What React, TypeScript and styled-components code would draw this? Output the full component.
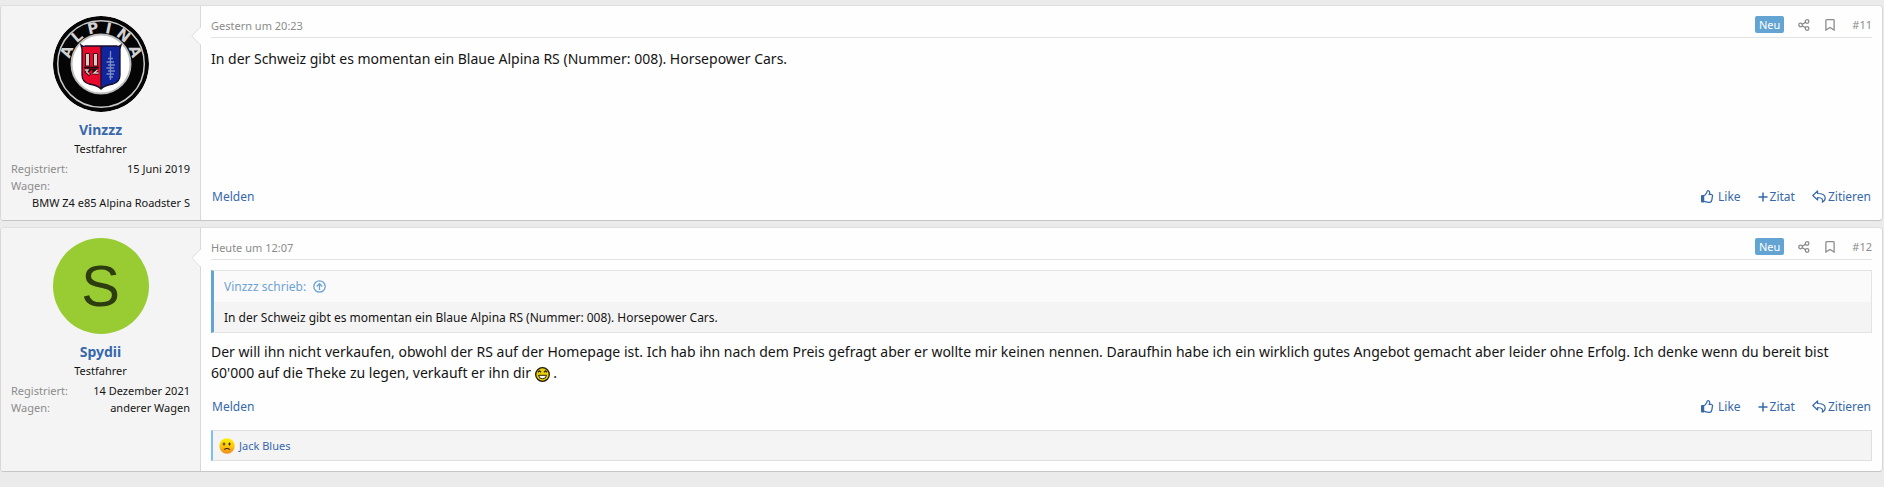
import React from 'react';
import styled, { createGlobalStyle } from 'styled-components';

const GlobalStyle = createGlobalStyle`
  *, *::before, *::after { box-sizing: border-box; }
  body {
    margin: 0;
    background: #ebebeb;
    color: #141414;
    font-family: "Noto Sans", "Open Sans", sans-serif;
    font-size: 14px;
    line-height: 21px;
  }
  a { color: #3768ab; text-decoration: none; }
`;

const Thread = styled.main`
  display: flex;
  flex-direction: column;
  gap: 6px;
  padding: 5px 1px 10px 0;
`;

const Post = styled.article`
  display: flex;
  background: #fefefe;
  border: 1px solid #d8d8d8;
  border-top-color: #dfdfdf;
  border-bottom-color: #c6c6c6;
  border-radius: 4px;
`;

const UserCell = styled.aside`
  position: relative;
  flex: 0 0 200px;
  display: flex;
  flex-direction: column;
  padding: 10px 10px 9px;
  background: #f4f4f4;
  border-right: 1px solid #d8d8d8;
  border-radius: 3px 0 0 3px;
`;

const Arrow = styled.svg`
  position: absolute;
  top: 20px;
  right: -1px;
`;

const Avatar = styled.a`
  display: block;
  align-self: center;
  width: 96px;
  height: 96px;
  border-radius: 50%;
  overflow: hidden;
`;

const LetterAvatar = styled(Avatar)`
  display: flex;
  align-items: center;
  justify-content: center;
  background: #99cc33;
  color: #2e3d0f;
  font-family: "Liberation Sans", Arial, sans-serif;
  font-size: 58px;
  line-height: 96px;
`;

const UserName = styled.h4`
  margin: 7px 0 0;
  font-size: 14px;
  font-weight: 700;
  line-height: 22px;
  text-align: center;
`;

const UserTitle = styled.h5`
  margin: 0 0 4px;
  font-size: 11px;
  font-weight: 400;
  line-height: 15px;
  text-align: center;
`;

const Facts = styled.dl`
  margin: 0;
  font-size: 11px;
  line-height: 17px;
`;

const Fact = styled.div`
  display: flex;
  flex-wrap: wrap;
  justify-content: space-between;
`;

const FactLabel = styled.dt`
  color: #8c8c8c;
`;

const FactValue = styled.dd`
  flex-grow: 1;
  margin: 0;
  text-align: right;
`;

const MainCell = styled.div`
  flex: 1;
  min-width: 0;
  display: flex;
  flex-direction: column;
  padding: 10px;
`;

const PostHeader = styled.header`
  display: flex;
  justify-content: space-between;
  height: 22px;
  border-bottom: 1px solid #e3e3e3;
  color: #8c8c8c;
  font-size: 11px;
  line-height: 19px;
  a { color: inherit; }
`;

const HeaderTools = styled.ul`
  display: flex;
  margin: 0;
  padding: 0;
  list-style: none;
`;

const Tool = styled.li<{ $gap: number }>`
  display: flex;
  align-items: center;
  height: 17px;
  margin-left: ${({ $gap }) => $gap}px;
  a { display: flex; }
`;

const NewBadge = styled.span`
  padding: 0 4px;
  border-radius: 2px;
  background: #63a4d2;
  color: #fefefe;
  line-height: 17px;
`;

const Message = styled.div`
  margin: 10px 0;
`;

const Quote = styled.blockquote`
  margin: 0 0 8px;
  border: 1px solid #e3e3e3;
  border-left: 3px solid #63a4d2;
  background: #f4f4f4;
  font-size: 12px;
`;

const QuoteTitle = styled.a`
  display: flex;
  align-items: center;
  gap: 7px;
  height: 31px;
  padding: 0 10px;
  background: #fafafa;
  && { color: #6ea3d4; }
`;

const QuoteText = styled.div`
  padding: 6px 10px 4px;
  line-height: 20px;
`;

const Smiley = styled.svg`
  vertical-align: -4px;
`;

const PostFooter = styled.footer`
  display: flex;
  align-items: center;
  justify-content: space-between;
  height: 27px;
  margin-top: auto;
  padding: 0 1px;
  font-size: 12px;
`;

const Actions = styled.div`
  display: flex;
  gap: 17px;
`;

const Action = styled.a<{ $gap?: number }>`
  display: flex;
  align-items: center;
  gap: ${({ $gap = 2 }) => $gap}px;
`;

const Reactions = styled.div`
  display: flex;
  align-items: center;
  gap: 4px;
  height: 31px;
  margin-top: 10px;
  padding: 0 6px;
  border: 1px solid #dfdfdf;
  border-left: 2px solid #7ebeec;
  background: #f4f4f4;
  font-size: 11px;
`;

const AlpinaLogo = () => (
  <svg width="96" height="96" viewBox="0 0 96 96" role="img" aria-label="Alpina">
    <defs>
      <path id="ring" d="M17.500 56 A31.500 31.500 0 1 1 78.500 56" />
    </defs>
    <circle cx="48" cy="48" r="48" fill="#050505" />
    <circle cx="48" cy="48" r="43.300" fill="none" stroke="#c9c9c9" strokeWidth="1.500" />
    <circle cx="48" cy="48" r="29.500" fill="#fff" stroke="#bdbdbd" strokeWidth="2" />
    <text
      fill="#d2d2d2"
      fontFamily="DejaVu Sans, sans-serif"
      fontWeight="700"
      fontSize="15"
      textAnchor="middle"
    >
      <textPath href="#ring" startOffset="50%">A L P I N A</textPath>
    </text>
    <path d="M28 29 Q30 31 32 30 H48 V73 Q44 69 36 68 Q29 66 29 59 V33 Z" fill="#e6092c" />
    <path d="M68 29 Q66 31 64 30 H48 V73 Q52 69 60 68 Q67 66 67 59 V33 Z" fill="#10259b" />
    <path
      d="M28 29 Q30 31 32 30 H64 Q66 31 68 29 L67 33 V59 Q67 66 60 68 Q52 69 48 73 Q44 69 36 68 Q29 66 29 59 V33 Z M48 30 V72"
      fill="none"
      stroke="#180e28"
      strokeWidth="1.300"
    />
    <path d="M32.500 37.500 H36.500 V50 H32.500 Z M40.500 37.500 H44.500 V50 H40.500 Z" fill="#d8cfc8" stroke="#3a1014" strokeWidth="1" />
    <path d="M31 51.500 H46" stroke="#1e090c" strokeWidth="1.600" />
    <path d="M32 54 H36 L33.500 56 L37 59 M44.500 54 H41 V58 M39.500 57 H45.500" fill="none" stroke="#1e090c" strokeWidth="3" />
    <path d="M32 54 H35 L33.500 56 L36.500 58.500 M44.500 54 L41 57 H45.500" fill="none" stroke="#d8cfc8" strokeWidth="1.300" />
    <path
      d="M57.500 35 V64 M55 42.500 H60 M53.500 46 H61 M55 49 H62 M53.500 52 H61 M55 55 H62 M53.500 58 H61 M56 61 H60"
      fill="none"
      stroke="#7c8bc0"
      strokeWidth="1.300"
    />
  </svg>
);

const ShareIcon = () => (
  <svg width="12" height="12" viewBox="0 0 12 12" fill="none" stroke="#8c8c8c" strokeWidth="1.300" aria-hidden="true">
    <circle cx="2.600" cy="6" r="1.800" />
    <circle cx="9.100" cy="2.500" r="1.800" />
    <circle cx="9.100" cy="9.500" r="1.800" />
    <path d="M4.200 5.200 L7.500 3.400 M4.200 6.800 L7.500 8.600" />
  </svg>
);

const BookmarkIcon = () => (
  <svg width="10" height="12" viewBox="0 0 10 12" fill="none" stroke="#8c8c8c" strokeWidth="1.300" aria-hidden="true">
    <path d="M0.900 11 V1.500 Q0.900 0.700 1.700 0.700 H8.300 Q9.100 0.700 9.100 1.500 V11 L5 8.500 Z" />
  </svg>
);

const LikeIcon = () => (
  <svg width="13" height="13" viewBox="0 0 512 512" fill="#3768ab" aria-hidden="true">
    <path d="M466.270 286.690C475.040 271.840 480 256 480 236.850c0-44.015-37.218-85.580-85.820-85.580H357.700c4.920-12.810 8.850-28.130 8.850-46.540C366.550 31.936 328.860 0 271.280 0c-61.607 0-58.093 94.933-71.760 108.600-22.747 22.747-49.615 66.447-68.760 83.400H32c-17.673 0-32 14.327-32 32v240c0 17.673 14.327 32 32 32h64c14.893 0 27.408-10.174 30.978-23.950 44.509 1.001 75.060 39.940 177.802 39.940 7.220 0 15.220.010 22.220.010 77.117 0 111.986-39.423 112.940-95.330 13.319-18.425 20.299-43.122 17.340-66.990 9.854-18.452 13.664-40.343 8.990-62.990zm-61.750 53.830c12.560 21.130 1.260 49.410-13.940 57.570 7.700 48.780-17.608 65.900-53.120 65.900h-37.820c-71.639 0-118.029-37.820-171.640-37.820V240h10.920c28.360 0 67.980-70.890 94.540-97.460 28.360-28.360 18.910-75.630 37.820-94.540 47.270 0 47.270 32.980 47.270 56.730 0 39.170-28.360 56.720-28.360 94.540h103.990c21.110 0 37.730 18.910 37.820 37.820.090 18.900-12.820 37.810-22.270 37.810 13.489 14.555 16.371 45.236-5.210 65.620z" />
  </svg>
);

const PlusIcon = () => (
  <svg width="10" height="10" viewBox="0 0 10 10" stroke="#3768ab" strokeWidth="1.500" aria-hidden="true">
    <path d="M5 0.500 V9.500 M0.500 5 H9.500" />
  </svg>
);

const ReplyIcon = () => (
  <svg width="14" height="13" viewBox="0 0 14 13" fill="none" stroke="#3768ab" strokeWidth="1.200" strokeLinejoin="round" aria-hidden="true">
    <path d="M0.800 5.500 L5.600 1 V3.500 C10.500 3.500 13.200 4.800 13.200 8 C13.200 9.900 12.200 11.300 10.300 12.200 C11.200 9.400 10.300 7.500 5.600 7.500 V10 Z" />
  </svg>
);

const JumpIcon = () => (
  <svg width="13" height="13" viewBox="0 0 13 13" fill="none" stroke="#6ea3d4" strokeWidth="1.300" aria-hidden="true">
    <circle cx="6.500" cy="6.500" r="5.700" />
    <path d="M6.500 10 V3.800 M3.700 6.500 L6.500 3.700 L9.300 6.500" />
  </svg>
);

const GrinSmiley = () => (
  <Smiley width="15" height="15" viewBox="0 0 15 15" role="img" aria-label="Großes Grinsen">
    <circle cx="7.500" cy="7.500" r="6.800" fill="#e9cf0c" stroke="#1c1800" strokeWidth="1.300" />
    <path d="M3 5.200 L4.500 3.800 L6 5.200 M9 5.200 L10.500 3.800 L12 5.200" fill="none" stroke="#2a2300" strokeWidth="1.200" />
    <path d="M3.500 8.300 H11.500 Q11 11.800 7.500 11.800 Q4 11.800 3.500 8.300 Z" fill="#fff" stroke="#2a2300" strokeWidth="1" />
  </Smiley>
);

const SadFace = () => (
  <svg width="16" height="16" viewBox="0 0 16 16" role="img" aria-label="Traurig">
    <defs>
      <linearGradient id="face" x1="0" y1="0" x2="0" y2="1">
        <stop offset="0" stopColor="#fff200" />
        <stop offset="0.500" stopColor="#fdc70c" />
        <stop offset="1" stopColor="#f08a1c" />
      </linearGradient>
    </defs>
    <circle cx="8" cy="8" r="7.700" fill="url(#face)" />
    <path d="M5 4.500 V7.500 M10.500 4.500 V7.500 M3.700 6 H6.300 M9.200 6 H11.800" stroke="#3b2500" strokeWidth="1" />
    <path d="M5 11.600 Q8 9.300 11 11.600" fill="none" stroke="#3b2500" strokeWidth="1.100" />
  </svg>
);

interface PostProps {
  avatar: React.ReactNode;
  user: string;
  facts: [string, string][];
  time: string;
  number: string;
  reactions?: React.ReactNode;
  children: React.ReactNode;
}

const ForumPost = ({ avatar, user, facts, time, number, reactions, children }: PostProps) => (
  <Post>
    <UserCell>
      <Arrow width="10" height="20" viewBox="0 0 10 20" aria-hidden="true">
        <path d="M10 1 L1 10 L10 19 Z" fill="#fefefe" />
        <path d="M9.500 1 L0.800 10 L9.500 19" fill="none" stroke="#dfdfdf" />
      </Arrow>
      {avatar}
      <UserName><a href="#user">{user}</a></UserName>
      <UserTitle>Testfahrer</UserTitle>
      <Facts>
        {facts.map(([label, value]) => (
          <Fact key={label}>
            <FactLabel>{label}:</FactLabel>
            <FactValue>{value}</FactValue>
          </Fact>
        ))}
      </Facts>
    </UserCell>
    <MainCell>
      <PostHeader>
        <a href="#post"><time>{time}</time></a>
        <HeaderTools>
          <Tool $gap={0}><NewBadge>Neu</NewBadge></Tool>
          <Tool $gap={14}><a href="#share" aria-label="Teilen"><ShareIcon /></a></Tool>
          <Tool $gap={15}><a href="#bookmark" aria-label="Lesezeichen"><BookmarkIcon /></a></Tool>
          <Tool $gap={17}><a href="#post">{number}</a></Tool>
        </HeaderTools>
      </PostHeader>
      <Message>{children}</Message>
      <PostFooter>
        <a href="#report">Melden</a>
        <Actions>
          <Action href="#like" $gap={4}><LikeIcon />Like</Action>
          <Action href="#multiquote"><PlusIcon />Zitat</Action>
          <Action href="#reply"><ReplyIcon />Zitieren</Action>
        </Actions>
      </PostFooter>
      {reactions}
    </MainCell>
  </Post>
);

export default function App() {
  return (
    <>
      <GlobalStyle />
      <Thread>
        <ForumPost
          avatar={<Avatar href="#user"><AlpinaLogo /></Avatar>}
          user="Vinzzz"
          facts={[['Registriert', '15 Juni 2019'], ['Wagen', 'BMW Z4 e85 Alpina Roadster S']]}
          time="Gestern um 20:23"
          number="#11"
        >
          In der Schweiz gibt es momentan ein Blaue Alpina RS (Nummer: 008). Horsepower Cars.
        </ForumPost>
        <ForumPost
          avatar={<LetterAvatar href="#user">S</LetterAvatar>}
          user="Spydii"
          facts={[['Registriert', '14 Dezember 2021'], ['Wagen', 'anderer Wagen']]}
          time="Heute um 12:07"
          number="#12"
          reactions={<Reactions><SadFace /><a href="#reactions">Jack Blues</a></Reactions>}
        >
          <Quote>
            <QuoteTitle href="#quote">Vinzzz schrieb: <JumpIcon /></QuoteTitle>
            <QuoteText>
              In der Schweiz gibt es momentan ein Blaue Alpina RS (Nummer: 008). Horsepower Cars.
            </QuoteText>
          </Quote>
          Der will ihn nicht verkaufen, obwohl der RS auf der Homepage ist. Ich hab ihn nach dem Preis gefragt
          aber er wollte mir keinen nennen. Daraufhin habe ich ein wirklich gutes Angebot gemacht aber leider
          ohne Erfolg. Ich denke wenn du bereit bist 60'000 auf die Theke zu legen, verkauft er ihn
          dir <GrinSmiley /> .
        </ForumPost>
      </Thread>
    </>
  );
}
